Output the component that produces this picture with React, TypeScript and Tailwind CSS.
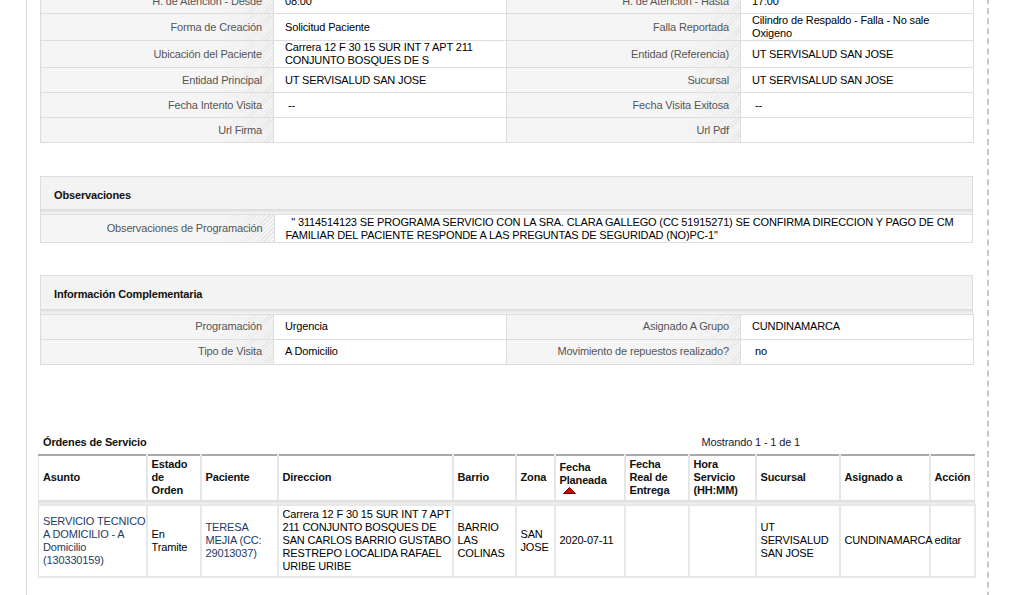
import React from 'react';

const labelCls =
  'text-right text-[#555] pr-[11px] pl-2 border border-[#ddd] whitespace-nowrap [background:linear-gradient(90deg,#f5f5f5_75%,rgba(245,245,245,0)),repeating-linear-gradient(135deg,#f5f5f5_0px,#f5f5f5_2px,#e2e2e2_2px,#e2e2e2_3px)]';
const valueCls = 'text-left text-black pl-[11px] pr-2 border border-[#ddd] bg-white whitespace-nowrap';

type Row = [string, React.ReactNode, string, React.ReactNode];

const generalRows: Row[] = [
  ['H. de Atención - Desde', '08:00', 'H. de Atención - Hasta', '17:00'],
  ['Forma de Creación', 'Solicitud Paciente', 'Falla Reportada', <>Cilindro de Respaldo - Falla - No sale<br />Oxigeno</>],
  ['Ubicación del Paciente', <>Carrera 12 F 30 15 SUR INT 7 APT 211<br />CONJUNTO BOSQUES DE S</>, 'Entidad (Referencia)', 'UT SERVISALUD SAN JOSE'],
  ['Entidad Principal', 'UT SERVISALUD SAN JOSE', 'Sucursal', 'UT SERVISALUD SAN JOSE'],
  ['Fecha Intento Visita', <span className="pl-[3px]">--</span>, 'Fecha Visita Exitosa', <span className="pl-[3px]">--</span>],
  ['Url Firma', '', 'Url Pdf', ''],
];

const infoRows: Row[] = [
  ['Programación', 'Urgencia', 'Asignado A Grupo', 'CUNDINAMARCA'],
  ['Tipo de Visita', 'A Domicilio', 'Movimiento de repuestos realizado?', <span className="pl-[3px]">no</span>],
];

const FourColTable = ({ rows, className }: { rows: Row[]; className?: string }) => (
  <table className={`w-[933px] table-fixed border-collapse ${className ?? ''}`}>
    <colgroup>
      <col className="w-[233px]" />
      <col className="w-[233px]" />
      <col className="w-[234px]" />
      <col className="w-[233px]" />
    </colgroup>
    <tbody>
      {rows.map((r, i) => (
        <tr key={i} className="h-[25px]">
          <td className={labelCls}>{r[0]}</td>
          <td className={valueCls}>{r[1]}</td>
          <td className={labelCls}>{r[2]}</td>
          <td className={valueCls}>{r[3]}</td>
        </tr>
      ))}
    </tbody>
  </table>
);

const SectionHeader = ({ title, tall }: { title: string; tall?: boolean }) => (
  <div className={`${tall ? 'h-[39px]' : 'h-[38px]'} flex flex-col border-b border-[#ddd]`}>
    <div className="flex-1 flex items-center pl-[13px] bg-[#f3f3f3] font-bold text-[#111] pt-[5px]">{title}</div>
    <div className="h-[5px] bg-[linear-gradient(180deg,#d9d9d9,#f6f6f6)]" />
  </div>
);

const headers: { label: React.ReactNode; w: string }[] = [
  { label: 'Asunto', w: 'w-[108px]' },
  { label: <>Estado<br />de<br />Orden</>, w: 'w-[54px]' },
  { label: 'Paciente', w: 'w-[77px]' },
  { label: 'Direccion', w: 'w-[175px]' },
  { label: 'Barrio', w: 'w-[63px]' },
  { label: 'Zona', w: 'w-[39px]' },
  {
    label: (
      <>
        Fecha<br />Planeada
        <span className="block h-[8px] pl-[3px]">
          <svg width="13" height="7" viewBox="0 0 13 7" className="block">
            <polygon points="0.5,6.5 6.5,0.5 12.5,6.5" fill="#d40000" stroke="#6b0000" strokeWidth="1" />
          </svg>
        </span>
      </>
    ),
    w: 'w-[70px]',
  },
  { label: <>Fecha<br />Real de<br />Entrega</>, w: 'w-[64px]' },
  { label: <>Hora<br />Servicio<br />(HH:MM)</>, w: 'w-[67px]' },
  { label: 'Sucursal', w: 'w-[84px]' },
  { label: 'Asignado a', w: 'w-[90px]' },
  { label: 'Acción', w: 'w-[45px]' },
];

const orderRow: React.ReactNode[] = [
  <span className="text-[#1d3a66]">SERVICIO TECNICO<br />A DOMICILIO - A<br />Domicilio<br />(130330159)</span>,
  <>En<br />Tramite</>,
  <span className="text-[#1d3a66]">TERESA<br />MEJIA (CC:<br />29013037)</span>,
  <>Carrera 12 F 30 15 SUR INT 7 APT<br />211 CONJUNTO BOSQUES DE<br />SAN CARLOS BARRIO GUSTABO<br />RESTREPO LOCALIDA RAFAEL<br />URIBE URIBE</>,
  <>BARRIO<br />LAS<br />COLINAS</>,
  <>SAN<br />JOSE</>,
  '2020-07-11',
  '',
  '',
  <>UT<br />SERVISALUD<br />SAN JOSE</>,
  'CUNDINAMARCA',
  'editar',
];

export default function App() {
  return (
    <div className="h-[595px] overflow-hidden bg-white pl-[26px] text-[11px] leading-[13px] tracking-[-0.15px] font-['Liberation_Sans',Arial,sans-serif]">
      <div className="w-[963px] h-[640px] border-r-2 border-dashed border-[#c8c8c8]">
        <div className="h-full border-l border-[#dcdcdc] pl-[13px] pr-[13px]">
          <FourColTable rows={generalRows} className="-mt-[12px]" />

          <div className="mt-[33px] border border-[#ddd] w-[933px]">
            <SectionHeader title="Observaciones" />
            <table className="w-full table-fixed border-collapse -mb-px">
              <colgroup>
                <col className="w-[233px]" />
                <col />
              </colgroup>
              <tbody>
                <tr className="h-[27px]">
                  <td className={`${labelCls} border-l-0 border-t-0`}>Observaciones de Programación</td>
                  <td className={`${valueCls} border-r-0 border-t-0 border-b-0`}>
                    &nbsp;&nbsp;" 3114514123 SE PROGRAMA SERVICIO CON LA SRA. CLARA GALLEGO (CC 51915271) SE CONFIRMA DIRECCION Y PAGO DE CM
                    <br />
                    FAMILIAR DEL PACIENTE RESPONDE A LAS PREGUNTAS DE SEGURIDAD (NO)PC-1"
                  </td>
                </tr>
              </tbody>
            </table>
          </div>

          <div className="mt-[32px] border border-[#ddd] border-b-0 w-[933px]">
            <SectionHeader title="Información Complementaria" tall />
          </div>
          <FourColTable rows={infoRows} className="-mt-px" />

          <div className="mt-[71px] -ml-[2px] w-[936px]">
            <div className="flex items-end justify-between pl-[5px] pb-[5px]">
              <span className="font-bold text-[#111]">Órdenes de Servicio</span>
              <span className="text-[11px] text-[#1a1a3a] mr-[174px]">Mostrando 1 - 1 de 1</span>
            </div>
            <table className="w-[936px] table-fixed border-collapse border-t-2 border-[#a8a8a8]">
              <colgroup>
                {headers.map((h, i) => (
                  <col key={i} className={h.w} />
                ))}
              </colgroup>
              <thead>
                <tr className="h-[45px] bg-white">
                  {headers.map((h, i) => (
                    <th
                      key={i}
                      className="text-left align-middle font-bold text-[#111] px-[4px] whitespace-nowrap border-x-2 border-[#e6e6e6] first:border-l first:pl-[4px] last:border-r"
                    >
                      {h.label}
                    </th>
                  ))}
                </tr>
                <tr>
                  <th colSpan={12} className="h-[5px] p-0 bg-[linear-gradient(180deg,#dadada,#f2f2f2)] border-x border-[#e0e0e0]" />
                </tr>
              </thead>
              <tbody>
                <tr className="h-[72px]">
                  {orderRow.map((c, i) => (
                    <td key={i} className="align-middle text-black px-[4px] whitespace-nowrap border-2 border-[#e8e8e8] first:border-l first:border-l-[#ddd]">
                      {c}
                    </td>
                  ))}
                </tr>
              </tbody>
            </table>
          </div>
        </div>
      </div>
    </div>
  );
}
